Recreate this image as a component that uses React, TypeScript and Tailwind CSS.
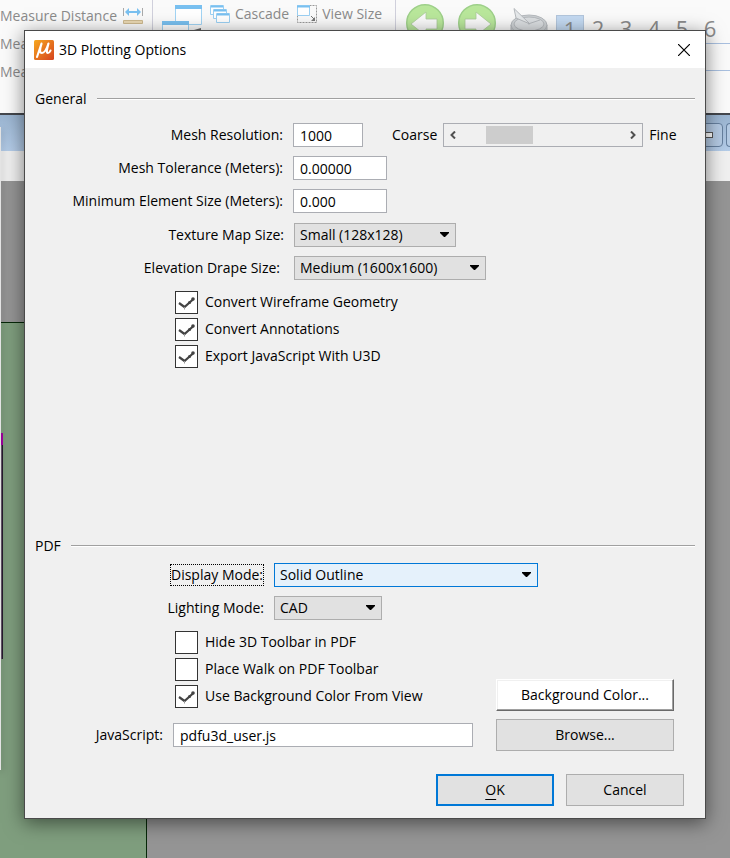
import { ReactNode, useState } from "react";

interface SelectProps {
  id: string;
  value: string;
  width: string;
  focused?: boolean;
}

interface CheckProps {
  id: string;
  label: string;
  defaultChecked?: boolean;
}

function GroupTitle({ children }: { children: ReactNode }) {
  return (
    <div className="flex h-6 items-center gap-[10px] pr-[10px] pl-[10px]">
      <h2>{children}</h2>
      <div className="h-[2px] flex-1 border-t border-[#a0a0a0] bg-white"></div>
    </div>
  );
}

function Select({ id, value, width, focused }: SelectProps) {
  return (
    <div className={`relative h-6 ${width}`}>
      <select
        id={id}
        className={`h-6 w-full appearance-none border pl-[5px] outline-none ${focused ? "border-[#0078d7] bg-[#e5f1fb]" : "border-[#adadad] bg-[#e1e1e1]"}`}
      >
        <option>{value}</option>
      </select>
      <svg className="pointer-events-none absolute top-[9px] right-[7px]" width="9" height="5" viewBox="0 0 9 5">
        <path d="M0 0h9v1L5 5H4L0 1z" fill="#000" />
      </svg>
    </div>
  );
}

function Check({ id, label, defaultChecked }: CheckProps) {
  const [checked, setChecked] = useState(!!defaultChecked);

  return (
    <div className="flex h-[23px] items-start gap-[7px]">
      <span className="relative size-[23px]">
        <input
          id={id}
          type="checkbox"
          checked={checked}
          onChange={(e) => setChecked(e.target.checked)}
          className="block size-[23px] appearance-none border border-[#333] bg-white"
        />
        {checked && (
          <svg className="pointer-events-none absolute inset-0" width="23" height="23" viewBox="0 0 23 23" fill="none">
            <path d="M4 12L9.500 16L18.500 8" stroke="#444" strokeWidth="2.200" />
            <path d="M9.500 16v2.500" stroke="#999" />
            <circle cx="18" cy="8" r="1.800" fill="#444" />
            <circle cx="14.500" cy="11.500" r="1.500" fill="#444" />
          </svg>
        )}
      </span>
      <label htmlFor={id} className="leading-[22px]">{label}</label>
    </div>
  );
}

function ArrowDisc({ flip }: { flip?: boolean }) {
  return (
    <svg className={flip ? "-scale-x-100" : ""} width="38" height="38" viewBox="0 0 38 38">
      <circle cx="19" cy="19" r="18.3" fill="#b9e79b" stroke="#9ed08a" strokeWidth="1.4" />
      <path d="M5 20L20 8V15H31V25H20V32z" fill="#fafafa" stroke="#a9c999" strokeWidth="0.8" />
    </svg>
  );
}

function Toolbar() {
  return (
    <header className="flex h-[113px] overflow-hidden bg-[#fafafa] text-sm whitespace-nowrap text-[#8b8b8b]">
      <div className="flex w-[153px] shrink-0 flex-col gap-1 border-r border-[#d0d0dc] pt-1">
        <div className="flex h-6 items-center gap-[6px]">
          <span>Measure Distance</span>
          <svg width="20" height="17" viewBox="0 0 20 17" fill="none">
            <path d="M0.5 0v8M19.5 0v8" stroke="#aaa" />
            <path d="M3 4h14" stroke="#79c0f0" strokeWidth="2" />
            <path d="M2 4l4-4v8zM18 4l-4-4v8z" fill="#79c0f0" />
            <path d="M0.5 12.5h19v3H0.5z" fill="#ead9b3" stroke="#cdb98f" />
          </svg>
        </div>
        <div className="h-6 leading-6">Mea</div>
        <div className="h-6 leading-6">Mea</div>
      </div>
      <div className="flex w-[243px] shrink-0 items-start border-r border-[#d0d0dc] pt-1 pl-[9px]">
        <svg width="41" height="36" viewBox="0 0 41 36" fill="none">
          <path d="M13.5 1.500h26v19h-26z" fill="#fff" stroke="#a2d4f4" />
          <path d="M13 1h27v4H13z" fill="#79c0f0" />
          <path d="M0.500 17.500h26v18h-26z" fill="#fff" stroke="#a2d4f4" />
          <path d="M0 17h27v4H0z" fill="#79c0f0" />
          <path d="M32 26l7-2v6z" fill="#666" />
        </svg>
        <div className="flex h-5 items-center gap-[5px] pl-[7px]">
          <svg width="20" height="18" viewBox="0 0 20 18" fill="#fff" stroke="#9bd0f3">
            <path d="M0.500 0.500h13v9h-13z" />
            <path d="M1 1.500h12" stroke="#79c0f0" strokeWidth="2" />
            <path d="M3.500 4.500h13v9h-13z" />
            <path d="M4 5.500h12" stroke="#79c0f0" strokeWidth="2" />
            <path d="M6.500 8.500h13v9h-13z" />
            <path d="M7 9.500h12" stroke="#79c0f0" strokeWidth="2" />
          </svg>
          <span>Cascade</span>
        </div>
        <div className="flex h-5 items-center gap-[5px] pl-2">
          <svg width="20" height="18" viewBox="0 0 20 18" fill="none">
            <path d="M0.500 0.500h19v17h-19z" stroke="#999" strokeDasharray="2 1" />
            <path d="M0.500 0.500h12v10h-12z" fill="#fff" stroke="#9bd0f3" />
            <path d="M0 1.500h13" stroke="#79c0f0" strokeWidth="2" />
            <path d="M14 11l3 3" stroke="#777" />
            <path d="M18 12v4h-4z" fill="#777" />
          </svg>
          <span>View Size</span>
        </div>
      </div>
      <div className="flex flex-1 flex-col">
        <div className="flex h-[43px] items-start pt-1 pl-[10px]">
          <div className="flex gap-[14px]">
            <ArrowDisc />
            <ArrowDisc flip />
            <svg className="mt-1" width="38" height="34" viewBox="0 0 38 34" fill="#cfd3d6" stroke="#b5b9bd">
              <path d="M1 17v8a18 9 0 0 0 36 0v-8z" />
              <ellipse cx="19" cy="17" rx="18" ry="10" />
              <ellipse cx="19" cy="16" rx="15" ry="7" fill="#dcdfe2" />
              <path d="M4 0.500L20 16L6 10z" fill="#e6e9eb" />
              <path d="M18 16L30 12" />
            </svg>
          </div>
          <div className="mt-[11px] ml-2 flex text-[22px] leading-[26px]">
            <span className="w-7 border border-[#b3c6dc] bg-[#c4daf2] text-center">1</span>
            {["2", "3", "4", "5", "6"].map((n) => (
              <span key={n} className="w-7 text-center">{n}</span>
            ))}
          </div>
        </div>
        <div className="h-7 border-y border-[#a9c0e0]"></div>
      </div>
    </header>
  );
}

function Backdrop() {
  return (
    <div className="flex min-h-screen flex-col">
      <Toolbar />
      <div className="h-[38px] border-t-2 border-[#44474d] bg-linear-to-b from-[#9ab4d0] to-[#b4cce8]">
        <div className="flex justify-end gap-[3px] pt-2">
          <div className="flex h-6 w-8 items-center justify-center rounded-sm border border-[#66809f] bg-[#b4cae3]">
            <div className="h-[6px] w-3 border border-[#555] bg-white"></div>
          </div>
          <div className="h-6 w-1 rounded-l-sm border border-r-0 border-[#66809f] bg-[#b4cae3]"></div>
        </div>
      </div>
      <div className="h-[30px] bg-[#f0f0f0]"></div>
      <div className="flex flex-1 flex-col bg-[#959595] pt-[141px]">
        <div className="w-[147px] flex-1 border-t border-r border-[#062808] bg-[#7f9e7e]">
          <div className="h-[110px]"></div>
          <div className="h-3 w-[3px] bg-[#a000a0]"></div>
          <div className="h-[214px] w-[3px] border-r border-[#281c30] bg-[#65586a]"></div>
        </div>
      </div>
      <div className="absolute top-[127px] left-0 h-[643px] w-px bg-[#e4e4e4] shadow-[1px_2px_6px_rgba(0,0,0,0.5)]"></div>
    </div>
  );
}

export default function App() {
  const [coarseness, setCoarseness] = useState(21);

  return (
    <div className="relative overflow-hidden font-['Open_Sans','Noto_Sans',sans-serif] text-sm leading-5 text-black">
      <Backdrop />
      <main className="absolute top-[30px] right-6 left-6 border border-[#4a4a4a] bg-[#f0f0f0] shadow-[0_4px_18px_rgba(0,0,0,0.5)]">
        <div className="flex h-[37px] items-center gap-[5px] bg-white pr-[15px] pl-[9px]">
          <svg width="20" height="20" viewBox="0 0 20 20">
            <defs>
              <linearGradient id="logo" x1="0" y1="0" x2="1" y2="1">
                <stop offset="0" stopColor="#f7a81f" />
                <stop offset="1" stopColor="#d5421e" />
              </linearGradient>
            </defs>
            <rect width="20" height="20" rx="1.500" fill="url(#logo)" />
            <path d="M7.500 3.500L3 17M7.500 4C5.500 10 5.500 13 8 13C11 13 13 8 14.500 3.500C13 9 12 13 14 13C15.500 13 16 11.500 16.500 10.500" fill="none" stroke="#fff" strokeWidth="2.100" strokeLinecap="round" strokeLinejoin="round" />
          </svg>
          <h1 className="flex-1">3D Plotting Options</h1>
          <button type="button" aria-label="Close">
            <svg width="12" height="12" viewBox="0 0 12 12" stroke="#000" strokeWidth="1.200">
              <path d="M0 0L12 12M12 0L0 12" />
            </svg>
          </button>
        </div>

        <form className="flex flex-col pt-[19px] pb-3" onSubmit={(e) => e.preventDefault()}>
          <GroupTitle>General</GroupTitle>

          <div className="mt-3 grid grid-cols-[258px_1fr] items-center gap-x-[10px] gap-y-[9px]">
            <label htmlFor="mesh" className="text-right">Mesh Resolution:</label>
            <div className="flex items-center">
              <input id="mesh" defaultValue="1000" className="h-6 w-[70px] border border-[#abadb3] bg-white pl-[6px]" />
              <label htmlFor="coarse" className="ml-[29px]">Coarse</label>
              <div className="mx-[6px] flex h-6 w-[200px] items-center justify-between border border-[#abadb3] px-[6px]">
                <svg width="6" height="8" viewBox="0 0 6 8" fill="none" stroke="#505050" strokeWidth="2">
                  <path d="M5 0.500L1.500 4L5 7.500" />
                </svg>
                <input
                  id="coarse"
                  type="range"
                  value={coarseness}
                  onChange={(e) => setCoarseness(Number(e.target.value))}
                  className="h-[18px] w-[164px] appearance-none bg-transparent [&::-webkit-slider-thumb]:h-[18px] [&::-webkit-slider-thumb]:w-[47px] [&::-webkit-slider-thumb]:appearance-none [&::-webkit-slider-thumb]:bg-[#cdcdcd]"
                />
                <svg width="6" height="8" viewBox="0 0 6 8" fill="none" stroke="#505050" strokeWidth="2">
                  <path d="M1 0.500L4.500 4L1 7.500" />
                </svg>
              </div>
              <span>Fine</span>
            </div>

            <label htmlFor="tolerance" className="text-right">Mesh Tolerance (Meters):</label>
            <input id="tolerance" defaultValue="0.00000" className="h-6 w-[94px] border border-[#abadb3] bg-white pl-[6px]" />

            <label htmlFor="element" className="text-right">Minimum Element Size (Meters):</label>
            <input id="element" defaultValue="0.000" className="h-6 w-[94px] border border-[#abadb3] bg-white pl-[6px]" />
          </div>

          <div className="mt-[10px] grid grid-cols-[259px_1fr] items-center gap-x-[10px] gap-y-[9px]">
            <label htmlFor="texture" className="text-right">Texture Map Size:</label>
            <Select id="texture" value="Small (128x128)" width="w-[162px]" />

            <label htmlFor="drape" className="pr-1 text-right">Elevation Drape Size:</label>
            <Select id="drape" value="Medium (1600x1600)" width="w-[192px]" />
          </div>

          <div className="mt-[11px] flex flex-col gap-1 pl-[150px]">
            <Check id="wireframe" label="Convert Wireframe Geometry" defaultChecked />
            <Check id="annotations" label="Convert Annotations" defaultChecked />
            <Check id="export" label="Export JavaScript With U3D" defaultChecked />
          </div>

          <div className="h-[166px]"></div>
          <GroupTitle>PDF</GroupTitle>

          <div className="mt-[5px] grid grid-cols-[239px_1fr] items-center gap-x-[10px] gap-y-[9px]">
            <label htmlFor="display" className="justify-self-end border border-dotted border-black">Display Mode:</label>
            <Select id="display" value="Solid Outline" width="w-[264px]" focused />
            <label htmlFor="lighting" className="text-right">Lighting Mode:</label>
            <Select id="lighting" value="CAD" width="w-[108px]" />
          </div>

          <div className="mt-[11px] mr-[31px] grid grid-cols-[1fr_178px] gap-x-[23px] gap-y-2">
            <div className="flex flex-col gap-1 pb-[3px] pl-[150px]">
              <Check id="toolbar" label="Hide 3D Toolbar in PDF" />
              <Check id="walk" label="Place Walk on PDF Toolbar" />
              <Check id="background" label="Use Background Color From View" defaultChecked />
            </div>
            <button type="button" className="h-8 self-end border border-t-white border-r-[#696969] border-b-[#696969] border-l-white bg-white shadow-[inset_-1px_-1px_0_#a0a0a0,inset_1px_1px_0_#f0f0f0]">
              Background Color...
            </button>
            <div className="flex items-center gap-[10px]">
              <label htmlFor="script" className="w-[138px] text-right">JavaScript:</label>
              <input id="script" defaultValue="pdfu3d_user.js" className="h-6 min-w-0 flex-1 border border-[#abadb3] bg-white pl-[6px]" />
            </div>
            <button type="button" className="h-8 border border-[#adadad] bg-[#e1e1e1]">Browse...</button>
          </div>

          <div className="mt-[23px] flex justify-end gap-3 pr-[21px]">
            <button type="submit" className="h-8 w-[118px] border-2 border-[#0078d7] bg-[#e1e1e1]">
              <span className="underline underline-offset-4">O</span>K
            </button>
            <button type="button" className="h-8 w-[118px] border border-[#adadad] bg-[#e1e1e1]">Cancel</button>
          </div>
        </form>
      </main>
    </div>
  );
}
